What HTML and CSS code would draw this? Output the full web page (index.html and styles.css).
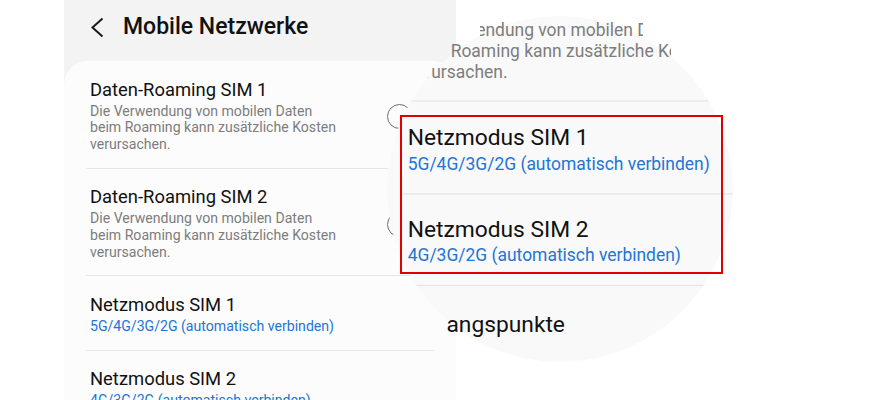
FILE: index.html
```html
<!DOCTYPE html>
<html lang="de">
<head>
<meta charset="utf-8">
<title>Mobile Netzwerke</title>
<link rel="stylesheet" href="styles.css">
</head>
<body>
<div class="stage">
  <section class="phone">
    <header class="appbar">
      <svg class="back" width="14" height="22" viewBox="0 0 14 22" aria-hidden="true"><polyline points="12.5,1.5 2.5,10.5 12.5,19.5" fill="none" stroke="#1a1a1a" stroke-width="2"/></svg>
      <h1 class="title">Mobile Netzwerke</h1>
    </header>
    <div class="card">
      <div class="item">
        <div class="text">
          <div class="item-title">Daten-Roaming SIM 1</div>
          <div class="item-desc"><span class="line">Die Verwendung von mobilen Daten</span><span class="line">beim Roaming kann zusätzliche Kosten</span><span class="line">verursachen.</span></div>
        </div>
        <span class="switch"></span>
      </div>
      <div class="item">
        <div class="text">
          <div class="item-title">Daten-Roaming SIM 2</div>
          <div class="item-desc"><span class="line">Die Verwendung von mobilen Daten</span><span class="line">beim Roaming kann zusätzliche Kosten</span><span class="line">verursachen.</span></div>
        </div>
        <span class="switch"></span>
      </div>
      <div class="item">
        <div class="text">
          <div class="item-title">Netzmodus SIM 1</div>
          <div class="item-value">5G/4G/3G/2G (automatisch verbinden)</div>
        </div>
      </div>
      <div class="item">
        <div class="text">
          <div class="item-title">Netzmodus SIM 2</div>
          <div class="item-value">4G/3G/2G (automatisch verbinden)</div>
        </div>
      </div>
    </div>
  </section>

  <div class="lens" aria-hidden="true">
    <div class="lens-content">
      <div class="ghost">
        <div class="spacer"></div>
        <div class="card">
          <div class="item">
            <div class="text">
              <div class="item-title">Daten-Roaming SIM 1</div>
              <div class="item-desc"><span class="line">Die Verwendung von mobilen Daten</span><span class="line">beim Roaming kann zusätzliche Kosten</span><span class="line">verursachen.</span></div>
            </div>
          </div>
          <div class="item">
            <div class="text">
              <div class="item-title">Daten-Roaming SIM 2</div>
              <div class="item-desc"><span class="line">Die Verwendung von mobilen Daten</span><span class="line">beim Roaming kann zusätzliche Kosten</span><span class="line">verursachen.</span></div>
            </div>
          </div>
          <div class="item">
            <div class="text">
              <div class="item-title">Netzmodus SIM 1</div>
              <div class="item-value">5G/4G/3G/2G (automatisch verbinden)</div>
            </div>
          </div>
          <div class="item">
            <div class="text">
              <div class="item-title">Netzmodus SIM 2</div>
              <div class="item-value">4G/3G/2G (automatisch verbinden)</div>
            </div>
          </div>
          <div class="item single">
            <div class="text">
              <div class="item-title">Zugangspunkte</div>
            </div>
          </div>
        </div>
      </div>
    </div>
  </div>

  <div class="highlight"></div>
</div>
</body>
</html>
```
FILE: styles.css
```css
* { box-sizing: border-box; margin: 0; padding: 0; }

html, body {
  width: 879px;
  height: 400px;
  overflow: hidden;
  background: #ffffff;
}

body {
  font-family: Roboto, "Noto Sans", "Liberation Sans", sans-serif;
  color: #111111;
}

.stage {
  position: relative;
  width: 879px;
  height: 400px;
  display: flex;
  overflow: hidden;
}

.phone {
  margin-left: 64px;
  width: 392px;
  height: 400px;
  background: #f3f3f3;
  display: flex;
  flex-direction: column;
}

.appbar {
  height: 61px;
  flex: none;
  display: flex;
  align-items: flex-start;
  padding: 13.5px 0 0 26px;
  gap: 19px;
}

.back {
  margin-top: 3px;
  flex: none;
}

.title {
  font-size: 23px;
  line-height: 26px;
  font-weight: 500;
  color: #111111;
}

.card {
  flex: 1;
  background: #fcfcfc;
  border-radius: 24px 24px 0 0;
}

.item {
  display: flex;
  align-items: center;
  justify-content: space-between;
  margin: 0 22px;
  padding: 17.5px 0 15.1px 4px;
}

.item + .item {
  border-top: 1px solid #e6e6e6;
}

.item.single {
  padding: 20px 0 20px 4px;
}

.item-title {
  font-size: 18.4px;
  line-height: 22px;
  color: #111111;
  white-space: nowrap;
}

.item-desc {
  margin-top: 2px;
  font-size: 14.1px;
  line-height: 16.7px;
  color: #7d7d7d;
}

.item-desc .line {
  display: block;
  white-space: nowrap;
}

.item-value {
  margin-top: 2px;
  font-size: 14.1px;
  line-height: 16.7px;
  color: #2474d6;
  white-space: nowrap;
}

.switch {
  position: relative;
  flex: none;
  width: 42px;
  height: 23px;
  margin-right: 5px;
}

.switch::before {
  content: "";
  position: absolute;
  left: 4px;
  right: 0;
  top: 3.5px;
  height: 16px;
  border: 1.5px solid #6f6f6f;
  border-radius: 8px;
}

.switch::after {
  content: "";
  position: absolute;
  left: 0;
  top: 0;
  width: 23px;
  height: 23px;
  border: 1.5px solid #6f6f6f;
  border-radius: 50%;
  background: #fcfcfc;
}

/* magnifier lens */
.lens {
  position: absolute;
  left: 380px;
  top: 0;
  width: 360px;
  height: 400px;
  background: radial-gradient(circle 173px at 180px 189px, #f9f9f9 172.5px, rgba(249, 249, 249, 0) 173.5px);
  clip-path: path("M 7 189 A 173 173 0 1 1 353 189 A 173 173 0 1 1 7 189 Z M 100 20 L 263 20 L 263 41 L 291 41 L 291 63 L 200 63 L 200 84 L 52 84 L 52 63 L 70 63 L 70 41 L 100 41 Z M 66 312 L 200 312 L 200 342 L 66 342 Z");
}

.lens-content {
  position: absolute;
  left: 0;
  top: 0;
  width: 879px;
  transform: translate(-83.7px, -240px) scale(1.238);
  transform-origin: 0 0;
}

.ghost {
  margin-left: 64px;
  width: 392px;
}

.ghost .spacer {
  height: 61px;
}

.ghost .card {
  background: transparent;
}

.highlight {
  position: absolute;
  left: 400px;
  top: 115px;
  width: 323px;
  height: 159px;
  border: 2px solid #e00000;
}
```
